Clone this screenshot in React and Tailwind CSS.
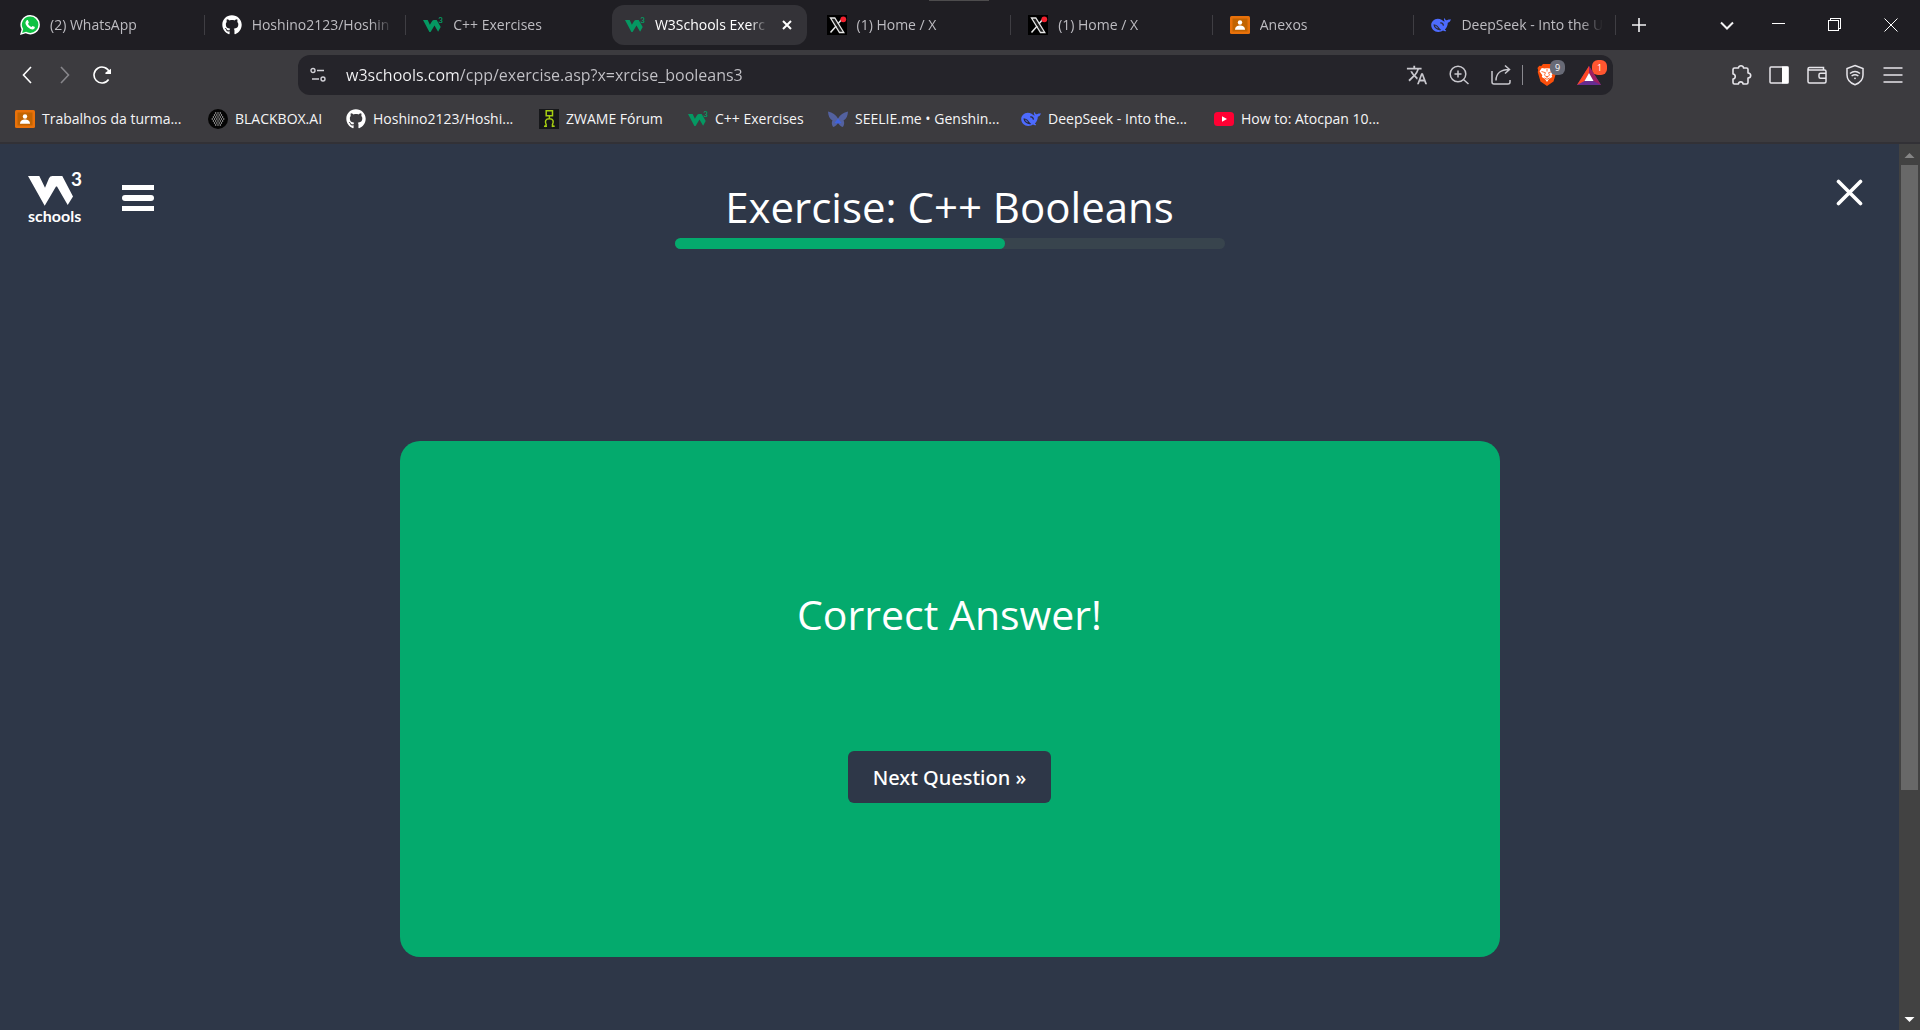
import React from "react";
import { FaGithub } from "react-icons/fa";
import { MdTranslate } from "react-icons/md";

const ICON = "h-5 w-5 shrink-0";

function WhatsAppIcon() {
  return (
    <svg className={ICON} viewBox="0 0 20 20" aria-hidden="true">
      <path d="M10.2 0A9.7 9.7 0 0 1 19.9 9.7 9.7 9.7 0 0 1 5.7 18.3L0 20l1.6-5.6A9.7 9.7 0 0 1 10.2 0z" fill="#fff" />
      <path d="M10.2 1.5a8.2 8.2 0 0 1 0 16.4c-1.5 0-2.9-.4-4.1-1.1l-4 1.1 1.1-3.8A8.2 8.2 0 0 1 10.2 1.5z" fill="#0fc243" />
      <path d="M6.9 5.2c.4-.3.9-.2 1.1.2l.8 1.9c.1.3 0 .5-.8 1.5.9 1.700 2 2.600 3.500 3.200.4-.4.7-1 1-1.100.3-.1 2.200.9 2.300 1.100.2 1.400-1 2.400-2.300 2.500-2.500 0-6.500-3.200-7-6-.2-1.300.5-2.700 1.400-3.300z" fill="#fff" />
    </svg>
  );
}

function GithubIcon() {
  return <FaGithub className={`${ICON} text-white`} aria-hidden="true" />;
}

function W3Icon() {
  return (
    <svg className={ICON} viewBox="0 0 20 20" aria-hidden="true">
      <path d="M0 5h4.700l2.200 4.800L9 6.200Q9.700 5 11 5h2.700l4 7-2.600 4.800-3.600-6.300-3.900 6.600H6.400z" fill="#059862" />
      <text x="15.200" y="8" fontSize="8" fontWeight="700" fontFamily="Lato, sans-serif" fill="#059862">3</text>
    </svg>
  );
}

function XIcon() {
  return (
    <svg className={ICON} viewBox="0 0 20 20" aria-hidden="true">
      <path d="M0 0h20v20H0z" fill="#000" />
      <path d="M3.500 3h4.300l9 14.500h-4.300z" fill="#222" stroke="#e6e6e6" strokeWidth="1.300" />
      <path d="M16 3 11 8.700M9.200 11 3.500 17.500" stroke="#e6e6e6" strokeWidth="1.500" fill="none" />
      <circle cx="16.300" cy="4.300" r="2.900" fill="#f4212e" />
    </svg>
  );
}

function ClassroomIcon() {
  return (
    <svg className={ICON} viewBox="0 0 20 20" aria-hidden="true">
      <rect y="1" width="20" height="18" rx="1.500" fill="#e8710a" />
      <rect x="2.500" y="3.500" width="15" height="13" fill="#c26401" />
      <circle cx="10" cy="7.500" r="2.200" fill="#fff" />
      <path d="M5 14.800c0-3 2.500-4.300 5-4.300s5 1.300 5 4.300z" fill="#fff" />
    </svg>
  );
}

function DeepSeekIcon() {
  return (
    <svg className={ICON} viewBox="0 0 20 20" aria-hidden="true">
      <path d="M19.700 4.300c-1 .3-1.500 0-2 .1-1 .2-1.800 1-2.300.8-1.200-.4-1.800-1.500-1.900-2.500-.9 1.200-.7 2.700.3 3.700-1 .3-2-.9-3.300-1.700-1-.7-2.300-1-3.700-1C3 3.800.2 6.700.2 10c0 3.900 3.300 7 7 7 2.500 0 3.600-.9 4.800-1.400 1.300.9 2.600.8 3.200.4.200-.4-.9-.9-1.300-1.500 2-1.900 2.900-4.300 2.900-6.800 1.800-.3 2.900-1.600 2.900-3.400z" fill="#4d6bfe" />
      <path d="M2.600 9.200c2.800.2 4.600 1.800 5.700 3.800.5.900 1.100 1.400 2 1.900-1.800.7-3.900.2-5.400-1.100-1.600-1.400-2.400-2.900-2.300-4.600z" fill="#2b2b3c" />
      <path d="M4 10.600c1.500.5 2.500 1.600 3.200 3-1.600-.4-2.900-1.500-3.200-3z" fill="#4d6bfe" />
      <path d="M9.300 8c1.400-.3 2.800.8 3.200 2.600" stroke="#2b2b3c" strokeWidth="1.300" fill="none" />
    </svg>
  );
}

function BlackboxIcon() {
  const dots = [];
  for (let row = -3; row <= 3; row++) {
    const n = 6 - Math.abs(row);
    for (let i = 0; i < n; i++) {
      dots.push([10 + (i - (n - 1) / 2) * 2.3, 10 + row * 2]);
    }
  }
  return (
    <svg className={ICON} viewBox="0 0 20 20" aria-hidden="true">
      <circle cx="10" cy="10" r="10" fill="#050505" />
      {dots.map(([x, y], i) => (
        <circle key={i} cx={x} cy={y} r="0.700" fill="#c8c8c8" />
      ))}
    </svg>
  );
}

function ZwameIcon() {
  return (
    <svg className={ICON} viewBox="0 0 20 20" aria-hidden="true">
      <path d="M0 0h20v20H0z" fill="#16171a" />
      <path d="M7.200 1.800h6.300v5H7.200zM10.400 7v2.500M6.300 18l.9-2.200c-1.700-3.400-.7-6 3.200-6s4.700 2.700 3 6l.8 2.200" stroke="#a6ce12" strokeWidth="1.500" fill="none" />
      <path d="M5 17.200h3M12.700 17.200h3" stroke="#a6ce12" strokeWidth="1.600" />
    </svg>
  );
}

function ButterflyIcon() {
  return (
    <svg className={ICON} viewBox="0 0 20 20" aria-hidden="true">
      <path d="M0 2.500c4.500.8 8 3.500 10 7 2-3.500 5.500-6.200 10-7-.3 4-1.400 7.500-4.500 9 1 1.500 1 4.500-.6 6.500-2-.3-4-2-4.900-4.500-.9 2.500-2.900 4.200-4.900 4.500-1.600-2-1.600-5-.6-6.500C1.400 10 .3 6.500 0 2.500z" fill="#53619f" />
      <path d="M10 9.500 13.500 14 10 14.500 6.500 14z" fill="#3f63e0" />
    </svg>
  );
}

function YoutubeIcon() {
  return (
    <svg className={ICON} viewBox="0 0 20 20" aria-hidden="true">
      <rect y="3" width="20" height="14" rx="3.500" fill="#ff0033" />
      <path d="m8 7.200 5 2.800-5 2.800z" fill="#fff" />
    </svg>
  );
}

const TABS = [
  { icon: WhatsAppIcon, title: "(2) WhatsApp" },
  { icon: GithubIcon, title: "Hoshino2123/Hoshin" },
  { icon: W3Icon, title: "C++ Exercises", last: true },
  { icon: W3Icon, title: "W3Schools Exerc", active: true },
  { icon: XIcon, title: "(1) Home / X" },
  { icon: XIcon, title: "(1) Home / X" },
  { icon: ClassroomIcon, title: "Anexos" },
  { icon: DeepSeekIcon, title: "DeepSeek - Into the U" },
];

const BOOKMARKS = [
  { icon: ClassroomIcon, title: "Trabalhos da turma...", width: "w-[173px]" },
  { icon: BlackboxIcon, title: "BLACKBOX.AI", width: "w-[118px]" },
  { icon: GithubIcon, title: "Hoshino2123/Hoshi...", width: "w-[173px]" },
  { icon: ZwameIcon, title: "ZWAME Fórum", width: "w-[129px]" },
  { icon: W3Icon, title: "C++ Exercises", width: "w-[120px]" },
  { icon: ButterflyIcon, title: "SEELIE.me • Genshin...", width: "w-[173px]" },
  { icon: DeepSeekIcon, title: "DeepSeek - Into the...", width: "w-[173px]" },
  { icon: YoutubeIcon, title: "How to: Atocpan 10...", width: "w-[173px]" },
];

function Tab({ icon: Icon, title, active, last }) {
  return (
    <div className="flex h-10 min-w-0 flex-1 items-center">
      <div className={`ml-1 mr-0.5 flex h-10 min-w-0 flex-1 items-center rounded-xl pl-[13px] ${active ? "bg-[#343338] pr-[15px]" : "pr-2.5"}`}>
        <button type="button" role="tab" aria-selected={!!active} className="flex min-w-0 flex-1 items-center gap-2.5">
          <Icon />
          <span className={`min-w-0 flex-1 overflow-hidden whitespace-nowrap text-left [mask-image:linear-gradient(to_right,black_84%,transparent)] ${active ? "text-white" : "text-[#bdbcc1]"}`}>
            {title}
          </span>
        </button>
        {active && (
          <button type="button" aria-label="Close tab" className="ml-3.5 shrink-0">
            <svg className="h-2.5 w-2.5" viewBox="0 0 10 10">
              <path d="m1 1 8 8M9 1 1 9" stroke="#fff" strokeWidth="2" />
            </svg>
          </button>
        )}
      </div>
      <div className={`h-5 w-px ${active || last ? "bg-transparent" : "bg-[#3f3e43]"}`} />
    </div>
  );
}

function TabStrip() {
  return (
    <div className="relative flex h-[50px] items-center bg-[#1f1e23] pl-[3px] text-sm">
      <div className="absolute left-[929px] top-0 h-px w-[60px] bg-[#4d4c4d]" />
      <div role="tablist" className="flex min-w-0 flex-1">
        {TABS.map((t, i) => (
          <Tab key={i} {...t} />
        ))}
      </div>
      <div className="flex w-[304px] shrink-0 items-center justify-between pl-4 pr-[22px] text-[#f2f2f3]">
        <button type="button" aria-label="New tab">
          <svg className="h-3.5 w-3.5" viewBox="0 0 14 14">
            <path d="M7 0v14M0 7h14" stroke="currentColor" strokeWidth="1.600" />
          </svg>
        </button>
        <div className="flex items-center gap-[42px]">
          <button type="button" aria-label="Search tabs" className="-mr-1">
            <svg className="h-3.5 w-3.5" viewBox="0 0 14 14">
              <path d="m1 4.500 6 6 6-6" stroke="currentColor" strokeWidth="2" fill="none" />
            </svg>
          </button>
          <button type="button" aria-label="Minimize">
            <svg className="h-3.5 w-3.5" viewBox="0 0 14 14" shapeRendering="crispEdges">
              <path d="M0 5.500h13" stroke="#fff" />
            </svg>
          </button>
          <button type="button" aria-label="Restore">
            <svg className="h-3.5 w-3.5" viewBox="0 0 14 14" shapeRendering="crispEdges">
              <path d="M.5 2.500h10v10H.5zM2.500 2.500v-2h10v10h-2" stroke="#fff" fill="none" />
            </svg>
          </button>
          <button type="button" aria-label="Close window">
            <svg className="h-3.5 w-3.5" viewBox="0 0 14 14">
              <path d="m.5.5 13 13M13.500.5l-13 13" stroke="#fff" />
            </svg>
          </button>
        </div>
      </div>
    </div>
  );
}

function Toolbar() {
  return (
    <div className="flex h-[50px] items-center bg-[#3c3b3f] text-[#e6e5ea]">
      <div className="flex w-[298px] shrink-0 items-center gap-5 pl-[17px]">
        <button type="button" aria-label="Back">
          <svg className="h-5 w-5" viewBox="0 0 20 20">
            <path d="M14 2 6.500 10l7.500 8" stroke="#fff" strokeWidth="1.600" fill="none" />
          </svg>
        </button>
        <button type="button" aria-label="Forward" disabled>
          <svg className="h-5 w-5" viewBox="0 0 20 20">
            <path d="m4 2 7.500 8L4 18" stroke="#87868b" strokeWidth="1.600" fill="none" />
          </svg>
        </button>
        <button type="button" aria-label="Reload" className="-ml-1">
          <svg className="h-5 w-5" viewBox="0 0 20 20">
            <path d="M15.600 14.500A8 8 0 1 1 16.500 7.200" stroke="#fff" strokeWidth="1.600" fill="none" />
            <path d="M18 3.800v5.200h-5.200q-1.300-.6-.2-1.500z" fill="#fff" />
          </svg>
        </button>
      </div>
      <div className="flex h-10 min-w-0 flex-1 items-center rounded-xl bg-[#25242a] px-3">
        <button type="button" aria-label="Site information" className="shrink-0">
          <svg className="h-4 w-4" viewBox="0 0 16 16" fill="none" stroke="#d2d1d7" strokeWidth="1.400">
            <circle cx="3" cy="3.500" r="2" />
            <path d="M7 3.500h7M2 12h7" />
            <circle cx="13" cy="12" r="2" />
          </svg>
        </button>
        <input
          type="text"
          aria-label="Address"
          defaultValue="w3schools.com/cpp/exercise.asp?x=xrcise_booleans3"
          className="ml-5 h-8 min-w-0 flex-1 bg-[linear-gradient(90deg,#f4f4f6_114px,#c4c3c8_114px)] bg-clip-text text-base text-transparent outline-none"
        />
        <div className="flex shrink-0 items-center text-[#c9c8ce]">
          <button type="button" aria-label="Translate">
            <MdTranslate className="h-[22px] w-[22px]" />
          </button>
          <button type="button" aria-label="Zoom" className="ml-5">
            <svg className="h-[22px] w-[22px]" viewBox="0 0 22 22" fill="none" stroke="currentColor" strokeWidth="1.500">
              <circle cx="10" cy="10" r="7.800" />
              <path d="m15.700 15.700 4.800 4.300M10 6.500v7M6.500 10h7" />
            </svg>
          </button>
          <button type="button" aria-label="Share" className="ml-5">
            <svg className="h-[22px] w-[22px]" viewBox="0 0 22 22" fill="none" stroke="currentColor" strokeWidth="1.500">
              <path d="M2 7v11q0 2 2 2h14q2 0 2-2v-2" />
              <path d="M6 16.500C6 9.500 11 5.500 19 5.500M15 1.500l4.500 4-4.500 4" />
            </svg>
          </button>
          <div className="ml-2.5 h-5 w-px bg-[#8a898f]" />
          <button type="button" aria-label="Brave Shields, 9 blocked" className="relative ml-3.5">
            <svg className="h-[22px] w-5" viewBox="0 0 20 22">
              <path d="M6 0h8l1.700 2 2-.2L19.500 4l-.7 2.300.5 1.700-2.800 9.500L10 22l-6.500-4.500L.7 8l.5-1.700L.5 4l1.800-2.200 2 .2z" fill="#fb4f0b" />
              <path d="m4.800 4 3 .6L10 4l2.200.6 3-.6 2.300 3.200-2.800 4 .5 1.800-3.200 2L10 18l-2-3-3.200-2 .5-1.800-2.800-4z" fill="#fff" />
              <path d="m4.500 7.500 4 1.200-1 2.200 1.300 1.600h2.400l1.300-1.600-1-2.200 4-1.200M10 12.500V14m-2.500 0L10 15.300l2.500-1.300M10 4.500v3" stroke="#fb4f0b" strokeWidth="0.800" fill="none" />
            </svg>
            <span className="absolute -right-2 -top-1 flex h-[15px] w-[15px] items-center justify-center rounded-md bg-[#686a76] text-[9px] leading-none text-white">9</span>
          </button>
          <button type="button" aria-label="Brave Rewards, 1 notification" className="relative ml-5">
            <svg className="h-[22px] w-6" viewBox="0 0 24 22">
              <path d="M12 2 0 21h24z" fill="#662d91" />
              <path d="M12 2 0 21l7.500-4L12 9z" fill="#ff4724" />
              <path d="m12 2 12 19-7.500-4L12 9z" fill="#9e1f63" />
              <path d="m12 9 4.500 8h-9z" fill="#fff" />
            </svg>
            <span className="absolute -right-1.5 -top-1 flex h-[15px] w-[15px] items-center justify-center rounded-md bg-[#ff5630] text-[9px] leading-none text-white">1</span>
          </button>
        </div>
      </div>
      <div className="flex w-[307px] shrink-0 items-center justify-end gap-4 pr-4">
        <button type="button" aria-label="Extensions">
          <svg className="h-[22px] w-[22px]" viewBox="0 0 22 22" fill="none" stroke="currentColor" strokeWidth="1.600" strokeLinejoin="round">
            <path d="M4.500 4h4C8.300.9 13.700.9 13.500 4h3q1.500 0 1.500 1.500V9c3.600.2 3.600 4.800 0 5v4.500q0 1.500-1.500 1.500H13c-.2-2.800-4.300-2.800-4.500 0h-4Q3 20 3 18.500V15c3-.3 3-4.700 0-5V5.500Q3 4 4.500 4z" />
          </svg>
        </button>
        <button type="button" aria-label="Side panel">
          <svg className="h-[22px] w-[22px]" viewBox="0 0 22 22">
            <rect x="2" y="3" width="18" height="16" rx="1" fill="none" stroke="currentColor" strokeWidth="1.500" />
            <path d="M14 2.500h6.500v17H14z" fill="#fff" />
          </svg>
        </button>
        <button type="button" aria-label="Wallet">
          <svg className="h-[22px] w-[22px]" viewBox="0 0 22 22" fill="none" stroke="currentColor" strokeWidth="1.500">
            <path d="M17.500 6V3.500h-14Q2 3.500 2 5v12.500Q2 19 3.500 19h15q1.500 0 1.500-1.500v-10Q20 6 18.500 6H3.500Q2 6 2 4.800" />
            <path d="M20 9.300h-5.500q-1.500 0-1.500 1.500v2q0 1.500 1.500 1.500H20" />
          </svg>
        </button>
        <button type="button" aria-label="VPN">
          <svg className="h-[22px] w-[22px]" viewBox="0 0 22 22" fill="none" stroke="currentColor" strokeWidth="1.500">
            <path d="m11 1.500 8 3v6.500c0 4.500-3 8-8 9.700-5-1.700-8-5.200-8-9.700V4.500z" />
            <path d="M6 9.500q5-3.800 10 0M7.600 12q3.400-2.400 6.800 0" />
            <circle cx="11" cy="14.300" r="0.900" fill="currentColor" stroke="none" />
          </svg>
        </button>
        <button type="button" aria-label="Menu">
          <svg className="h-[22px] w-[22px]" viewBox="0 0 22 22" stroke="currentColor" strokeWidth="1.600">
            <path d="M1.500 4h19M1.500 11h19M1.500 18h19" />
          </svg>
        </button>
      </div>
    </div>
  );
}

function BookmarksBar() {
  return (
    <nav aria-label="Bookmarks" className="flex h-11 items-center gap-5 border-b-2 border-[#323136] bg-[#3c3b3f] pb-1 pl-[15px] text-sm text-[#f5f5f6]">
      {BOOKMARKS.map(({ icon: Icon, title, width }, i) => (
        <a key={i} href="#" className={`flex shrink-0 items-center gap-[7px] whitespace-nowrap ${width}`}>
          <Icon />
          {title}
        </a>
      ))}
    </nav>
  );
}

function Logo() {
  return (
    <a href="#" aria-label="W3Schools home" className="block">
      <svg className="h-[54px] w-14" viewBox="0 0 56 54" fill="#fff">
        <path d="M0 4h11.300L17 15.700l4-9.500Q22 4 24.500 4h9.800L45 24.500 39.700 33 29 14.500h-1L16.700 33.700z" />
        <text x="43" y="13.500" fontSize="19" fontWeight="700" fontFamily="Lato, sans-serif">3</text>
        <text x="0" y="50" fontSize="16" fontWeight="700" fontFamily="Lato, sans-serif">schools</text>
      </svg>
    </a>
  );
}

function ExercisePage() {
  return (
    <main className="flex min-w-0 flex-1 flex-col bg-[#2e3748] text-white">
      <header className="grid grid-cols-[1fr_550px_1fr] items-start">
        <div className="flex items-start pl-7 pt-7">
          <Logo />
          <button type="button" aria-label="Exercise menu" className="ml-[38px] mt-[13px] flex w-8 flex-col gap-[5px]">
            <span className="h-[5px] bg-white" />
            <span className="h-1.5 rounded-sm bg-white" />
            <span className="h-[5px] bg-white" />
          </button>
        </div>
        <div className="pt-8">
          <h1 id="exercise-title" className="text-center text-[42px] leading-[62px]">Exercise: C++ Booleans</h1>
          <div role="progressbar" aria-labelledby="exercise-title" aria-valuenow={60} aria-valuemin={0} aria-valuemax={100} className="h-[11px] rounded-full bg-[#38444d]">
            <div className="h-full w-3/5 rounded-full bg-[#04aa6d]" />
          </div>
        </div>
        <div className="flex justify-end pr-9 pt-[35px]">
          <button type="button" aria-label="Close exercise">
            <svg className="h-7 w-7" viewBox="0 0 28 28">
              <path d="m3.500 2.500 22 22M25.500 2.500l-22 22" stroke="#fff" strokeWidth="3.600" strokeLinecap="round" />
            </svg>
          </button>
        </div>
      </header>
      <section className="mx-auto mt-48 flex w-full max-w-[1100px] flex-col items-center rounded-[20px] bg-[#04aa6d] pb-[154px] pt-[142px]">
        <h2 className="text-[41px] leading-[62px]">Correct Answer!</h2>
        <button type="button" className="mt-[106px] h-[52px] rounded-md bg-[#2e3748] px-[25px] pt-0.5 font-['Noto_Sans'] text-xl font-medium">
          Next Question »
        </button>
      </section>
    </main>
  );
}

function Scrollbar() {
  return (
    <div aria-hidden="true" className="flex w-[21px] shrink-0 flex-col items-center bg-[#424242]">
      <svg className="h-[21px] w-[21px] shrink-0" viewBox="0 0 21 21">
        <path d="m5.500 14 5-5 5 5z" fill="#868686" />
      </svg>
      <div className="min-h-0 w-full flex-1 px-0.5">
        <div className="h-[74%] bg-[#686868]" />
      </div>
      <svg className="h-[21px] w-[21px] shrink-0" viewBox="0 0 21 21">
        <path d="m5.500 8 5 5 5-5z" fill="#fff" />
      </svg>
    </div>
  );
}

export default function App() {
  return (
    <div className="flex min-h-screen flex-col overflow-hidden bg-[#2e3748] font-['Open_Sans','Noto_Sans',sans-serif]">
      <TabStrip />
      <Toolbar />
      <BookmarksBar />
      <div className="flex flex-1">
        <ExercisePage />
        <Scrollbar />
      </div>
    </div>
  );
}
